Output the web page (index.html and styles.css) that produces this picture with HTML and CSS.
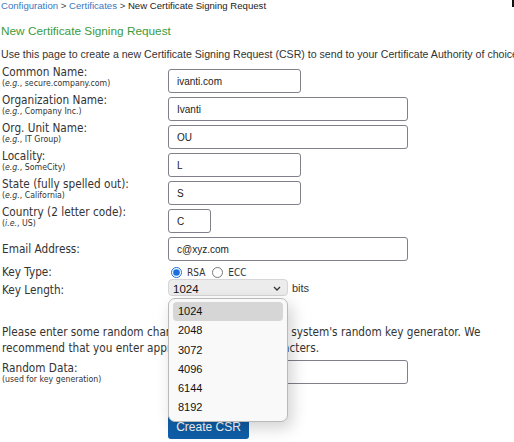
FILE: index.html
```html
<!DOCTYPE html>
<html>
<head>
  <title>New Certificate Signing Request</title>
  <link rel="stylesheet" href="styles.css">
</head>
<body>

  <div class="crumbs">
    <a href="#">Configuration</a> &gt; <a href="#">Certificates</a> &gt; <span class="here">New Certificate Signing Request</span>
  </div>

  <h1 class="title">New Certificate Signing Request</h1>

  <p class="intro">Use this page to create a new Certificate Signing Request (CSR) to send to your Certificate Authority of choice.</p>

  <form class="csr-form">
    <div class="row">
      <div class="label">Common Name:<span class="hint">(<i>e.g.</i>, secure.company.com)</span></div>
      <div class="field"><input class="text short" type="text" value="ivanti.com"></div>
    </div>
    <div class="row">
      <div class="label">Organization Name:<span class="hint">(<i>e.g.</i>, Company Inc.)</span></div>
      <div class="field"><input class="text long" type="text" value="Ivanti"></div>
    </div>
    <div class="row">
      <div class="label">Org. Unit Name:<span class="hint">(<i>e.g.</i>, IT Group)</span></div>
      <div class="field"><input class="text long" type="text" value="OU"></div>
    </div>
    <div class="row">
      <div class="label">Locality:<span class="hint">(<i>e.g.</i>, SomeCity)</span></div>
      <div class="field"><input class="text short" type="text" value="L"></div>
    </div>
    <div class="row">
      <div class="label">State (fully spelled out):<span class="hint">(<i>e.g.</i>, California)</span></div>
      <div class="field"><input class="text short" type="text" value="S"></div>
    </div>
    <div class="row">
      <div class="label">Country (2 letter code):<span class="hint">(<i>i.e.</i>, US)</span></div>
      <div class="field"><input class="text tiny" type="text" value="C"></div>
    </div>
    <div class="row middle">
      <div class="label">Email Address:</div>
      <div class="field"><input class="text long" type="text" value="c@xyz.com"></div>
    </div>
    <div class="row middle keytype">
      <div class="label">Key Type:</div>
      <div class="field radios">
        <label><input type="radio" name="kt" checked> RSA</label>
        <label><input type="radio" name="kt"> ECC</label>
      </div>
    </div>
    <div class="row middle keylen">
      <div class="label">Key Length:</div>
      <div class="field">
        <div class="select-wrap">
          <div class="select">1024
            <svg class="chev" width="8" height="5" viewBox="0 0 8 5"><path d="M1 1 L4 4 L7 1" fill="none" stroke="#333" stroke-width="1.3"/></svg>
          </div>
          <ul class="options">
            <li class="active">1024</li>
            <li>2048</li>
            <li>3072</li>
            <li>4096</li>
            <li>6144</li>
            <li>8192</li>
          </ul>
        </div>
        <span class="unit">bits</span>
      </div>
    </div>

    <p class="note">Please enter some random characters to augment the system's random key generator. We recommend that you enter approximately 20-30 characters.</p>

    <div class="row random">
      <div class="label">Random Data:<span class="hint">(used for key generation)</span></div>
      <div class="field"><input class="text long" type="text" value=""></div>
    </div>

    <div class="actions">
      <button type="button">Create CSR</button>
    </div>
  </form>

  <span class="edge-mark"></span>

</body>
</html>
```

FILE: styles.css
```css
body {
  margin: 0;
  padding: 0 0 0 1px;
  background: #fff;
  color: #333;
  font-family: "Liberation Sans", Arial, sans-serif;
  overflow: hidden;
  position: relative;
  width: 514px;
  height: 442px;
}

.crumbs {
  font-size: 9.6px;
  line-height: 12px;
  color: #444;
  white-space: nowrap;
}

.crumbs a {
  color: #3a78c2;
  text-decoration: none;
}

.crumbs .here {
  color: #222;
}

.title {
  font-size: 11.8px;
  font-weight: normal;
  color: #3c9a3c;
  line-height: 16px;
  margin: 11px 0 0;
}

.intro {
  font-size: 10.6px;
  line-height: 14px;
  color: #333;
  margin: 8px 0 0;
  white-space: nowrap;
  overflow: hidden;
  width: 513px;
}

.csr-form {
  margin-top: 8px;
  font-family: "DejaVu Sans Condensed", "DejaVu Sans", sans-serif;
  font-size: 11.7px;
  color: #333;
}

.row {
  display: grid;
  grid-template-columns: 167px 1fr;
  align-items: start;
  margin-bottom: 4px;
}

.row.middle {
  align-items: center;
}

.label {
  line-height: 12px;
  padding-left: 1px;
  margin-top: -3px;
}

.row.middle .label {
  margin-top: 0;
}

.row.random .label {
  margin-top: 2px;
}

.hint {
  display: block;
  font-size: 8.7px;
  line-height: 10px;
}

.text {
  display: block;
  box-sizing: border-box;
  height: 24px;
  border: 1px solid #80808a;
  border-radius: 3px;
  padding: 0 8px;
  font-family: "Liberation Sans", Arial, sans-serif;
  font-size: 10px;
  color: #222;
  margin: 0;
}

.text.short { width: 133px; }
.text.long { width: 240px; }
.text.tiny { width: 43px; }

.keytype {
  margin-top: 3px;
  margin-bottom: 0;
}

.radios {
  display: flex;
  align-items: center;
  gap: 4px;
  font-size: 10px;
  height: 14px;
}

.radios label {
  display: flex;
  align-items: center;
  gap: 5px;
}

.radios input {
  margin: 0 0 0 3px;
  width: 11px;
  height: 11px;
  accent-color: #1a6fe0;
}

.row.keylen .label {
  margin-top: 5px;
}

.field {
  display: flex;
  align-items: center;
}

.select-wrap {
  position: relative;
}

.select {
  box-sizing: border-box;
  width: 120px;
  height: 17px;
  background: #ececec;
  border: 1px solid #d6d6d6;
  border-radius: 4px;
  font-family: "Liberation Sans", Arial, sans-serif;
  font-size: 11.5px;
  line-height: 15px;
  padding: 3px 0 0 4px;
  color: #111;
  display: flex;
  justify-content: space-between;
  align-items: center;
}

.chev {
  margin-right: 6px;
  margin-top: -1px;
}

.unit {
  font-family: "Liberation Sans", Arial, sans-serif;
  font-size: 11px;
  margin-left: 4px;
  margin-top: 0;
}

.options {
  position: absolute;
  left: 0;
  top: 19px;
  width: 120px;
  box-sizing: border-box;
  margin: 0;
  padding: 3px 4px;
  list-style: none;
  background: #f9f9f9;
  border: 1px solid #b9b9b9;
  border-radius: 7px;
  box-shadow: 4px 6px 16px rgba(0, 0, 0, 0.18);
  font-family: "Liberation Sans", Arial, sans-serif;
  font-size: 11px;
  color: #111;
  z-index: 2;
}

.options li {
  height: 19.3px;
  line-height: 19px;
  padding-left: 5px;
  border-radius: 4px;
}

.options li.active {
  background: #d6d6d6;
}

.note {
  margin: 28px 0 4px 1px;
  line-height: 16px;
  width: 486px;
}

.actions {
  margin-top: 31px;
  padding-left: 167px;
}

.actions button {
  background: #0f5ea8;
  color: #fff;
  border: none;
  border-radius: 3px;
  font-family: "Liberation Sans", Arial, sans-serif;
  font-size: 12px;
  height: 24px;
  width: 81px;
  padding: 0;
}

.edge-mark {
  position: absolute;
  right: 0;
  top: 0;
  width: 3px;
  height: 7px;
  background: #111;
}
```
